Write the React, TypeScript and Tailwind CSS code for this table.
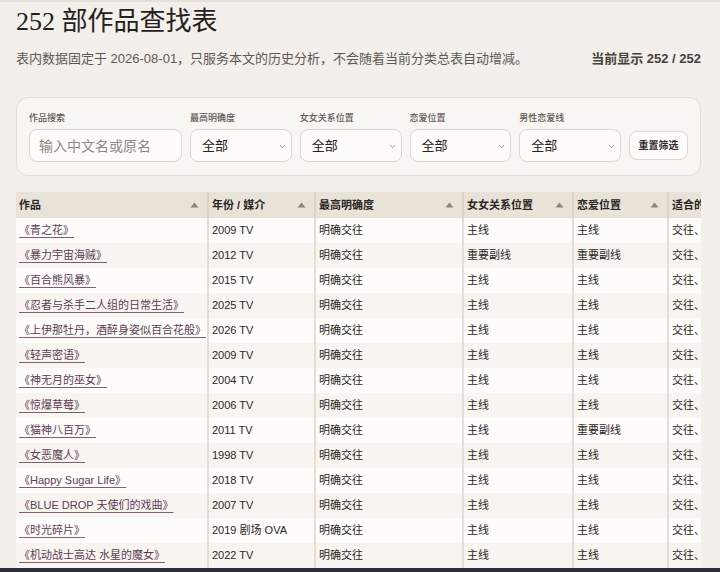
import { ChevronDown } from "lucide-react";

interface WorkRow {
    title: string;
    year: string;
    clarity: string;
    relation: string;
    romance: string;
    fit: string;
}

const works: WorkRow[] = [
    { title: "《青之花》", year: "2009 TV", clarity: "明确交往", relation: "主线", romance: "主线", fit: "交往、告白" },
    { title: "《暴力宇宙海贼》", year: "2012 TV", clarity: "明确交往", relation: "重要副线", romance: "重要副线", fit: "交往、告白" },
    { title: "《百合熊风暴》", year: "2015 TV", clarity: "明确交往", relation: "主线", romance: "主线", fit: "交往、告白" },
    { title: "《忍者与杀手二人组的日常生活》", year: "2025 TV", clarity: "明确交往", relation: "主线", romance: "主线", fit: "交往、告白" },
    { title: "《上伊那牡丹，酒醉身姿似百合花般》", year: "2026 TV", clarity: "明确交往", relation: "主线", romance: "主线", fit: "交往、告白" },
    { title: "《轻声密语》", year: "2009 TV", clarity: "明确交往", relation: "主线", romance: "主线", fit: "交往、告白" },
    { title: "《神无月的巫女》", year: "2004 TV", clarity: "明确交往", relation: "主线", romance: "主线", fit: "交往、告白" },
    { title: "《惊爆草莓》", year: "2006 TV", clarity: "明确交往", relation: "主线", romance: "主线", fit: "交往、告白" },
    { title: "《猫神八百万》", year: "2011 TV", clarity: "明确交往", relation: "主线", romance: "重要副线", fit: "交往、告白" },
    { title: "《女恶魔人》", year: "1998 TV", clarity: "明确交往", relation: "主线", romance: "主线", fit: "交往、告白" },
    { title: "《Happy Sugar Life》", year: "2018 TV", clarity: "明确交往", relation: "主线", romance: "主线", fit: "交往、告白" },
    { title: "《BLUE DROP 天使们的戏曲》", year: "2007 TV", clarity: "明确交往", relation: "主线", romance: "主线", fit: "交往、告白" },
    { title: "《时光碎片》", year: "2019 剧场 OVA", clarity: "明确交往", relation: "主线", romance: "主线", fit: "交往、告白" },
    { title: "《机动战士高达 水星的魔女》", year: "2022 TV", clarity: "明确交往", relation: "主线", romance: "主线", fit: "交往、告白" },
];

const filters = ["最高明确度", "女女关系位置", "恋爱位置", "男性恋爱线"];

const columns = [
    { label: "作品", width: "w-[193px]" },
    { label: "年份 / 媒介", width: "w-[107px]" },
    { label: "最高明确度", width: "w-[148px]" },
    { label: "女女关系位置", width: "w-[110px]" },
    { label: "恋爱位置", width: "w-[95px]" },
];

function SortArrow() {
    return (
        <svg width="9" height="6" viewBox="0 0 9 6" className="shrink-0">
            <path d="M4.5 0.5 L8.5 5.5 L0.5 5.5 Z" fill="#8b847c" />
        </svg>
    );
}

function FilterSelect({ label }: { label: string }) {
    return (
        <div className="flex min-w-0 flex-1 flex-col gap-[5px]">
            <span className="text-[9px] leading-[11px] font-medium text-[#5f5953]">{label}</span>
            <div className="relative">
                <select
                    defaultValue="全部"
                    className="h-[33px] w-full appearance-none rounded-lg border border-[#ddd6ce] bg-[#fdfcfa] pl-[11px] text-[13px] text-[#252220] outline-none"
                >
                    <option>全部</option>
                </select>
                <ChevronDown className="pointer-events-none absolute right-[5px] top-[13px] text-[#5a5550]" size={9} strokeWidth={1.6} />
            </div>
        </div>
    );
}

export default function App() {
    return (
        <div className="relative h-[572px] overflow-hidden border-t-2 border-[#e5e0d9] bg-[#f3efea] pl-4 pr-[19px] font-['Liberation_Sans','Noto_Sans_CJK_SC',sans-serif] text-[#2a2724]">
            <h1 className="mt-[4px] font-['Liberation_Serif','Noto_Sans_CJK_SC',serif] text-[26px] leading-[32px] font-normal text-[#24201d]">
                252 部作品查找表
            </h1>

            <div className="mt-[11px] flex items-center justify-between text-[13px] leading-[20px]">
                <p className="text-[#5e5954]">表内数据固定于 2026-08-01，只服务本文的历史分析，不会随着当前分类总表自动增减。</p>
                <p className="font-bold text-[#46413c]">当前显示 252 / 252</p>
            </div>

            <div className="mt-[28px] flex items-end gap-2 rounded-xl border border-[#e3ddd5] bg-[#f8f6f2] px-[12px] pt-[15px] pb-[13px]">
                <div className="flex w-[153px] shrink-0 flex-col gap-[5px]">
                    <span className="text-[9px] leading-[11px] font-medium text-[#5f5953]">作品搜索</span>
                    <input
                        placeholder="输入中文名或原名"
                        className="h-[33px] w-full rounded-lg border border-[#ddd6ce] bg-[#fdfcfa] px-[9px] text-[14px] outline-none placeholder:text-[#8d8882]"
                    />
                </div>
                {filters.map((f) => (
                    <FilterSelect key={f} label={f} />
                ))}
                <button className="mb-[2px] h-[29px] w-[59px] shrink-0 rounded-lg border border-[#ddd6ce] bg-[#fdfcfa] text-[10px] font-bold text-[#2f2b28]">
                    重置筛选
                </button>
            </div>

            <div className="mt-4 overflow-hidden">
                <table className="w-[853px] table-fixed border-separate border-spacing-0 text-[11px]">
                    <thead>
                        <tr className="bg-[#e8e2d9]">
                            {columns.map((c) => (
                                <th key={c.label} className={`${c.width} h-[26px] border-r-2 border-[#d9d2c9] p-0 text-left`}>
                                    <div className="flex items-center justify-between pl-[3px] pr-[8px] font-bold text-[#2a2623]">
                                        <span>{c.label}</span>
                                        <SortArrow />
                                    </div>
                                </th>
                            ))}
                            <th className="w-[200px] h-[26px] p-0 pl-[3px] text-left font-bold whitespace-nowrap text-[#2a2623]">适合的切入点</th>
                        </tr>
                    </thead>
                    <tbody>
                        {works.map((w, i) => (
                            <tr key={w.title} className={i % 2 === 0 ? "bg-[#fdfcfb]" : "bg-[#f8f5f1]"}>
                                <td className="h-[25px] border-r-2 border-[#e3ded7] p-0 pl-[3px] whitespace-nowrap">
                                    <a className="text-[#5c3c53] underline decoration-[#7d5f74] underline-offset-[3px]">{w.title}</a>
                                </td>
                                <td className="border-r-2 border-[#e3ded7] p-0 pl-[3px] whitespace-nowrap">{w.year}</td>
                                <td className="border-r-2 border-[#e3ded7] p-0 pl-[3px]">{w.clarity}</td>
                                <td className="border-r-2 border-[#e3ded7] p-0 pl-[3px]">{w.relation}</td>
                                <td className="border-r-2 border-[#e3ded7] p-0 pl-[3px]">{w.romance}</td>
                                <td className="p-0 pl-[3px] whitespace-nowrap">{w.fit}</td>
                            </tr>
                        ))}
                    </tbody>
                </table>
            </div>

            <div className="absolute bottom-0 left-0 h-[4px] w-full bg-[#2c3038]" />
        </div>
    );
}
